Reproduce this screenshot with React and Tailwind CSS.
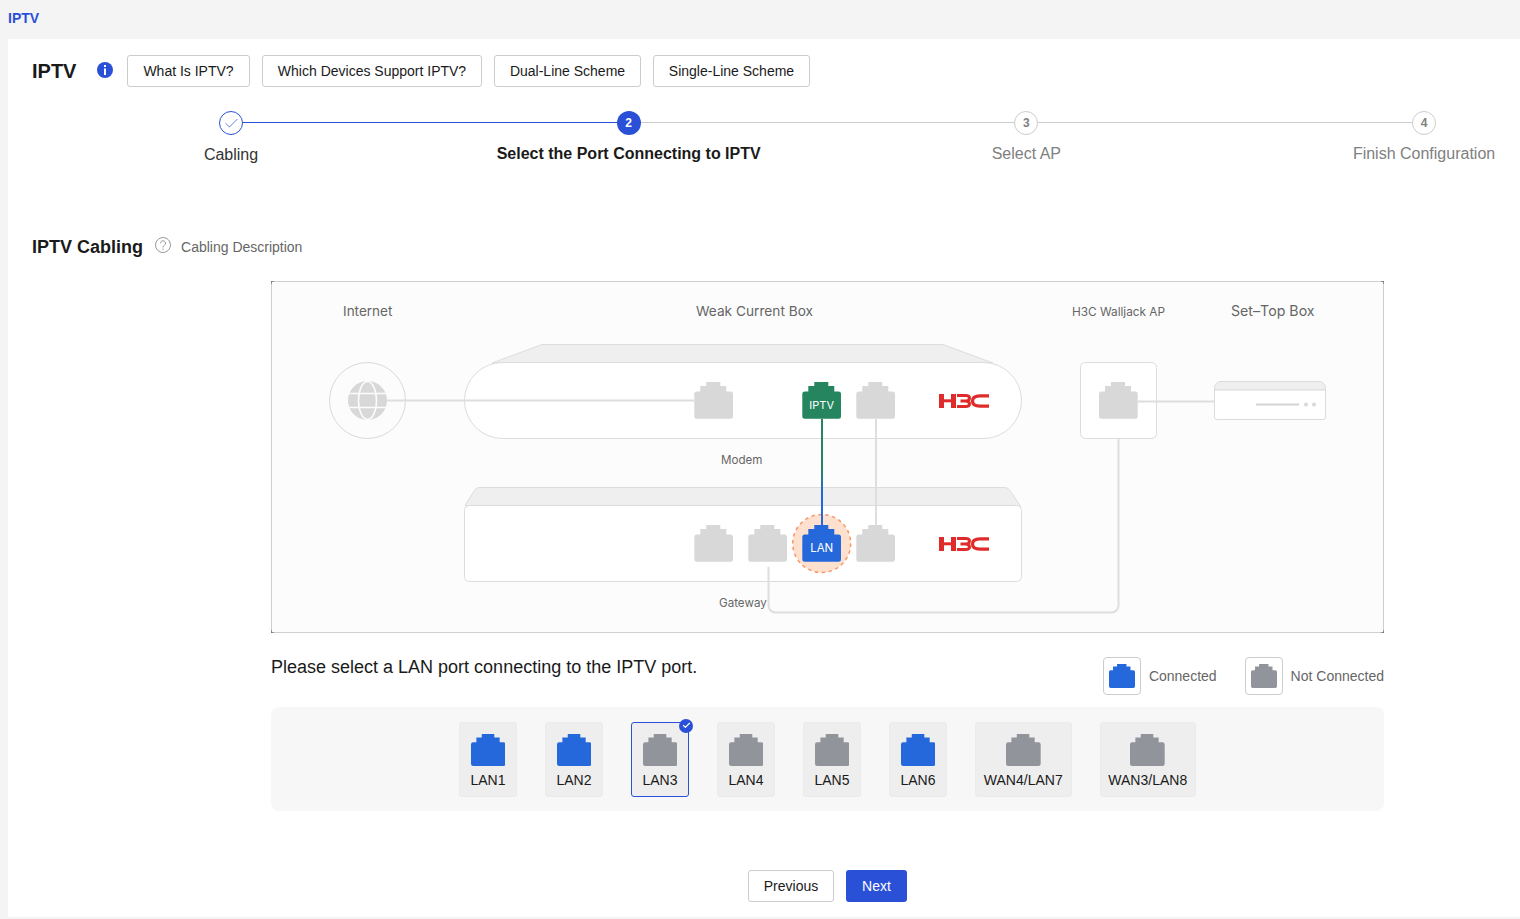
import { Check } from "lucide-react";

const PORT_PATH =
  "M12 0H26V4H32V9.5H36.2A2.5 2.5 0 0 1 38.7 12V34.2A2.5 2.5 0 0 1 36.2 36.7H2.5A2.5 2.5 0 0 1 0 34.2V12A2.5 2.5 0 0 1 2.5 9.5H6V4H12Z";

const topButtons = [
  { text: "What Is IPTV?", width: "w-[123px]" },
  { text: "Which Devices Support IPTV?", width: "w-[220px]" },
  { text: "Dual-Line Scheme", width: "w-[147px]" },
  { text: "Single-Line Scheme", width: "w-[157px]" },
];

const ports = [
  { name: "LAN1", connected: true },
  { name: "LAN2", connected: true },
  { name: "LAN3", connected: false, selected: true },
  { name: "LAN4", connected: false },
  { name: "LAN5", connected: false },
  { name: "LAN6", connected: true },
  { name: "WAN4/LAN7", connected: false, wide: true },
  { name: "WAN3/LAN8", connected: false, wide: true },
];

const PortIcon = ({ color, className }) => (
  <svg viewBox="0 0 38.7 36.7" preserveAspectRatio="none" className={className}>
    <path d={PORT_PATH} fill={color} />
  </svg>
);

const DiagramPort = ({ x, y, color = "#d8d8d8" }) => (
  <path d={PORT_PATH} fill={color} transform={`translate(${x} ${y})`} />
);

// red H3C logo
const H3cLogo = ({ y }) => (
  <g transform={`translate(939 ${y})`} fill="none" stroke="#e02b2b">
    <path d="M2.500 0V14M14.500 0V14" strokeWidth="5" />
    <path d="M4 6.800H13" strokeWidth="3" />
    <path d="M18 1.500H26.500C29.500 1.500 30.500 2.800 30.500 4C30.500 6 29 7 26.500 7H21.500M26.500 7C29 7 30.500 8 30.500 10C30.500 11.200 29.500 12.500 26.500 12.500H18" strokeWidth="3" />
    <path d="M50 1.800H41C36.500 1.800 33.500 3.700 33.500 7C33.500 10.300 36.500 12.200 41 12.200H50" strokeWidth="3.200" />
  </g>
);

const Step = ({ state, num, label, labelClass }) => (
  <div className="w-6 flex flex-col items-center shrink-0">
    {state === "done" && (
      <div className="w-6 h-6 rounded-full border border-[#2b50d8] flex items-center justify-center">
        <Check size={17} strokeWidth={1} color="#2b50d8" />
      </div>
    )}
    {state === "active" && (
      <div className="w-6 h-6 rounded-full bg-[#2b50d8] text-white text-xs font-bold flex items-center justify-center">
        {num}
      </div>
    )}
    {state === "todo" && (
      <div className="w-6 h-6 rounded-full border border-[#cccccc] text-[#808080] text-xs font-bold flex items-center justify-center">
        {num}
      </div>
    )}
    <div className={`whitespace-nowrap text-base leading-6 ${labelClass}`}>{label}</div>
  </div>
);

const Diagram = () => (
  <svg viewBox="271 281 1113 352" className="block w-[1113px] h-[352px]" style={{ fontFamily: "Inter, sans-serif" }}>
    <defs>
      <linearGradient id="iptvLine" gradientUnits="userSpaceOnUse" x1="0" y1="419" x2="0" y2="525">
        <stop offset="0.45" stopColor="#25855e" />
        <stop offset="0.7" stopColor="#2568dc" />
      </linearGradient>
    </defs>
    <rect x="271.500" y="281.500" width="1112" height="351" fill="#fcfcfc" stroke="#cfcfcf" />
    <path d="M271 284V281H274M1381 281H1384V284M271 630V633H274M1384 630V633H1381" fill="none" stroke="#555" strokeWidth="1" />

    <g fill="#666666" fontSize="13.500">
      <text x="343" y="316">Internet</text>
      <text x="696" y="316" fontSize="13.700">Weak Current Box</text>
      <text x="1072" y="316" fontSize="11.800">H3C Walljack AP</text>
      <text x="1231" y="316" fontSize="14.200">Set–Top Box</text>
      <text x="721" y="464" fontSize="11.600">Modem</text>
      <text x="719" y="607" fontSize="11.600">Gateway</text>
    </g>

    {/* internet */}
    <circle cx="367.500" cy="400.500" r="38" fill="#fcfcfc" stroke="#d9d9d9" />
    <circle cx="367.500" cy="400.500" r="19.500" fill="#d8d8d8" />
    <ellipse cx="367.500" cy="400.500" rx="9" ry="19" fill="none" stroke="#fcfcfc" strokeWidth="1.500" />
    <path d="M349 393.500H386M349 407.500H386" stroke="#fcfcfc" strokeWidth="1.500" />

    {/* modem */}
    <path d="M492 363L542 344.500H943L993 363Z" fill="#efefef" stroke="#dddddd" />
    <rect x="464.500" y="362.500" width="557" height="76" rx="38" fill="#ffffff" stroke="#dcdcdc" />
    <path d="M387 400.500H694" stroke="#dedede" strokeWidth="2" />
    <DiagramPort x={694.300} y={382} />
    <DiagramPort x={802.300} y={382} color="#25855e" />
    <DiagramPort x={856.300} y={382} />
    <H3cLogo y={394} />

    {/* gateway */}
    <path d="M465 505.500L474 491A6 6 0 0 1 479 487.500H1005A6 6 0 0 1 1010 490.500L1021 507Z" fill="#efefef" stroke="#dddddd" />
    <rect x="464.500" y="505.500" width="557" height="76" rx="5" fill="#ffffff" stroke="#dcdcdc" />
    <circle cx="821.700" cy="543.500" r="29" fill="#fde0cd" stroke="#f8966a" strokeWidth="1.500" strokeDasharray="3.500 3.500" />
    <path d="M876 419V525" stroke="#dedede" strokeWidth="2" />
    <path d="M822 419V526" stroke="url(#iptvLine)" strokeWidth="2" />
    <DiagramPort x={694.300} y={525} />
    <DiagramPort x={748.300} y={525} />
    <DiagramPort x={802.300} y={525} color="#2568dc" />
    <DiagramPort x={856.300} y={525} />
    <H3cLogo y={537} />
    <text x="821.700" y="409" fill="#ffffff" fontSize="11" textAnchor="middle">IPTV</text>
    <text x="821.700" y="552" fill="#ffffff" fontSize="11.500" textAnchor="middle">LAN</text>

    {/* cable from gateway to AP */}
    <path d="M768.500 567V605A7 7 0 0 0 775.500 612.500H1111.500A7 7 0 0 0 1118.500 605V438" fill="none" stroke="#dedede" strokeWidth="2" />

    {/* AP */}
    <rect x="1080.500" y="362.500" width="76" height="76" rx="5" fill="#ffffff" stroke="#dcdcdc" />
    <DiagramPort x={1099} y={382} />
    <path d="M1137 401.500H1215" stroke="#dedede" strokeWidth="2" />

    {/* set-top box */}
    <path d="M1214.500 390V388A6.500 6.500 0 0 1 1221 381.500H1319A6.500 6.500 0 0 1 1325.500 388V390Z" fill="#efefef" stroke="#dcdcdc" />
    <path d="M1214.500 390H1325.500V417A2.500 2.500 0 0 1 1323 419.500H1217A2.500 2.500 0 0 1 1214.500 417Z" fill="#ffffff" stroke="#dcdcdc" />
    <path d="M1256 404.500H1299" stroke="#d4d4d4" strokeWidth="2" />
    <circle cx="1306" cy="404.500" r="2" fill="#d8d8d8" />
    <circle cx="1314" cy="404.500" r="2" fill="#d8d8d8" />
  </svg>
);

export default function App() {
  return (
    <div className="bg-[#f4f4f4] h-[919px] overflow-hidden font-['Liberation_Sans',Arial,sans-serif] text-[#1a1a1a]">
      <div className="h-[39px] pl-2 flex items-center">
        <span className="text-sm font-bold text-[#2b50d8] -mt-1">IPTV</span>
      </div>

      <div className="ml-2 bg-white h-[878px] pl-6">
        {/* title row */}
        <div className="flex items-center pt-4">
          <h1 className="text-xl font-bold w-[65px]">IPTV</h1>
          <svg viewBox="0 0 16 16" className="w-4 h-4 mr-3.5 -mt-0.5">
            <circle cx="8" cy="8" r="8" fill="#2b50d8" />
            <rect x="7" y="3" width="2" height="2" fill="#fff" />
            <rect x="7" y="6.500" width="2" height="6.500" fill="#fff" />
          </svg>
          <div className="flex gap-3">
            {topButtons.map((b) => (
              <button key={b.text} className={`h-8 text-sm border border-[#cccccc] rounded-[3px] bg-white ${b.width}`}>
                {b.text}
              </button>
            ))}
          </div>
        </div>

        {/* stepper */}
        <div className="flex items-start mt-6 ml-[187px] w-[1217px]">
          <Step state="done" label="Cabling" labelClass="mt-2 text-[#333333]" />
          <div className="flex-1 h-px bg-[#2b50d8] mt-[11px]" />
          <Step state="active" num="2" label="Select the Port Connecting to IPTV" labelClass="mt-[7px] font-bold" />
          <div className="flex-1 h-px bg-[#cccccc] mt-[11px]" />
          <Step state="todo" num="3" label="Select AP" labelClass="mt-[7px] text-[#808080]" />
          <div className="flex-1 h-px bg-[#cccccc] mt-[11px]" />
          <Step state="todo" num="4" label="Finish Configuration" labelClass="mt-[7px] text-[#808080]" />
        </div>

        {/* cabling section */}
        <div className="flex items-center mt-[68px] h-6">
          <h2 className="text-lg font-bold">IPTV Cabling</h2>
          <svg viewBox="0 0 16 16" className="w-4 h-4 ml-3 -mt-1" fill="none" stroke="#999999">
            <circle cx="8" cy="8" r="7.500" />
            <path d="M5.500 6.200A2.500 2.500 0 1 1 9.400 8.300C8.500 8.900 8 9.400 8 10.500" />
            <circle cx="8" cy="12.300" r="0.700" fill="#999999" stroke="none" />
          </svg>
          <span className="ml-2.5 text-sm text-[#666666]">Cabling Description</span>
        </div>

        <div className="ml-[239px] w-[1113px] mt-[22px]">
          <Diagram />

          <div className="flex justify-between mt-6 h-[38px]">
            <p className="text-lg leading-[22px] -mt-[1px]">Please select a LAN port connecting to the IPTV port.</p>
            <div className="flex text-sm text-[#666666] gap-7">
              <div className="flex items-center gap-2">
                <div className="w-[38px] h-[38px] border border-[#cccccc] rounded-[4px] flex items-center justify-center">
                  <PortIcon color="#2568dc" className="w-[26px] h-6" />
                </div>
                Connected
              </div>
              <div className="flex items-center gap-2">
                <div className="w-[38px] h-[38px] border border-[#cccccc] rounded-[4px] flex items-center justify-center">
                  <PortIcon color="#92949c" className="w-[26px] h-6" />
                </div>
                Not Connected
              </div>
            </div>
          </div>

          <div className="mt-3 h-[104px] bg-[#f7f7f7] rounded-lg flex justify-center items-center gap-7">
            {ports.map((p) => (
              <div
                key={p.name}
                className={`relative h-[75px] rounded-[3px] bg-[#eeeeee] flex flex-col items-center pt-[11px] border ${
                  p.wide ? "w-[96.5px]" : "w-[58px]"
                } ${p.selected ? "border-[#2b50d8]" : "border-[#ebebeb]"}`}
              >
                <PortIcon color={p.connected ? "#2568dc" : "#92949c"} className="w-[34.7px] h-8" />
                <span className="text-sm mt-[5px] leading-[18px]">{p.name}</span>
                {p.selected && (
                  <span className="absolute -top-[4px] -right-[5px] w-3.5 h-3.5 rounded-full bg-[#2b50d8] flex items-center justify-center">
                    <Check size={9} strokeWidth={3} color="#ffffff" />
                  </span>
                )}
              </div>
            ))}
          </div>

          <div className="flex justify-center gap-3 mt-[59px]">
            <button className="h-8 w-[86px] text-sm border border-[#cccccc] rounded-[3px] bg-white">Previous</button>
            <button className="h-8 w-[61px] text-sm rounded-[3px] bg-[#2b50d8] text-white">Next</button>
          </div>
        </div>
      </div>
    </div>
  );
}
